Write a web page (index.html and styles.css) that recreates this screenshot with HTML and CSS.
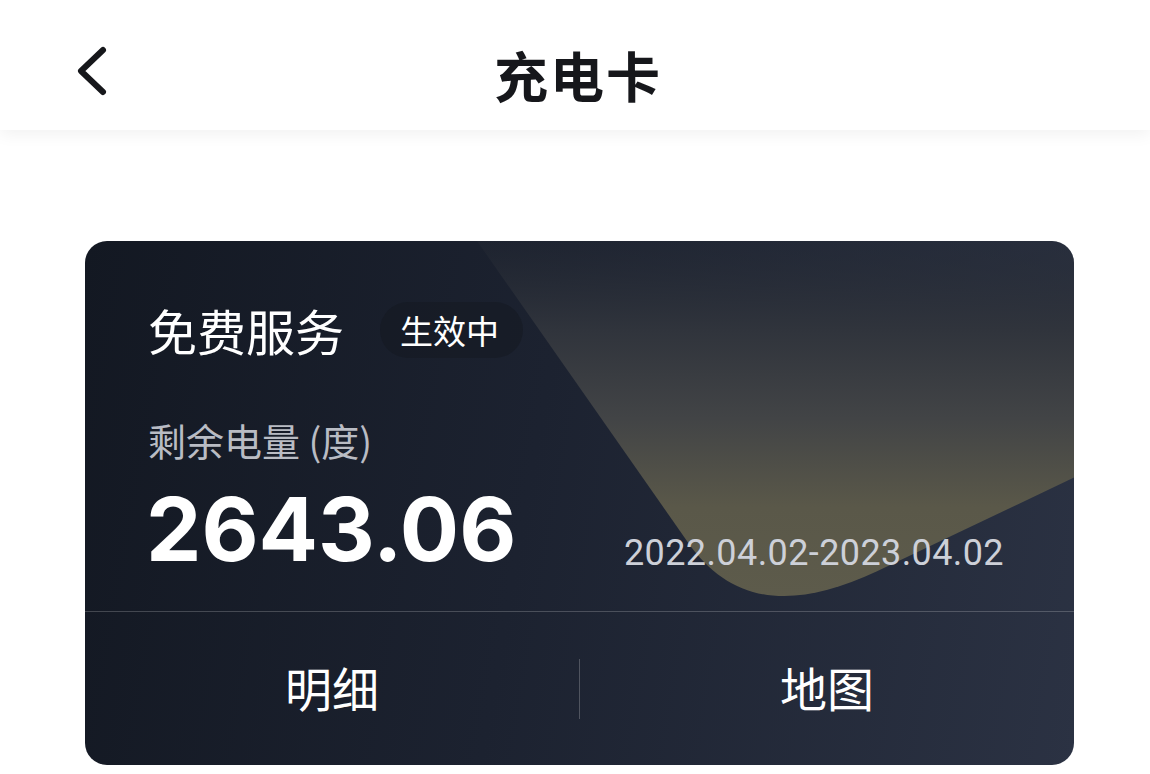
FILE: index.html
```html
<!DOCTYPE html>
<html>
<head>
    <title>充电卡</title>
    <link rel="stylesheet" href="styles.css">
</head>
<body>
    <div class="header">
        <div class="backBtn">
            <svg width="40" height="52" viewBox="0 0 40 52">
                <path d="M31 5 L9 26 L31 47" fill="none" stroke="#16171b" stroke-width="6" stroke-linecap="round" stroke-linejoin="round"/>
            </svg>
        </div>
        <div class="title">充电卡</div>
        <div></div>
    </div>

    <div class="card">
        <svg class="cardShape" viewBox="0 0 989 525" preserveAspectRatio="none">
            <defs>
                <linearGradient id="shapeFill" x1="0" y1="0" x2="0" y2="1">
                    <stop offset="0" stop-color="#262b35" stop-opacity="0.3"/>
                    <stop offset="0.25" stop-color="#30343c"/>
                    <stop offset="0.5" stop-color="#424446"/>
                    <stop offset="0.75" stop-color="#5a5849"/>
                    <stop offset="1" stop-color="#5d5b4b"/>
                </linearGradient>
            </defs>
            <path d="M392 0 L603 302 C645 362 705 372 792 331 L989 237 L989 0 Z" fill="url(#shapeFill)"/>
        </svg>

        <div class="cardTop">
            <div class="cardHead">
                <span class="cardName">免费服务</span>
                <span class="badge">生效中</span>
            </div>
            <div class="label">剩余电量 (度)</div>
            <div class="amountRow">
                <span class="amount">2643.06</span>
                <span class="period">2022.04.02-2023.04.02</span>
            </div>
        </div>

        <div class="cardBottom">
            <div class="action">明细</div>
            <div class="split"></div>
            <div class="action">地图</div>
        </div>
    </div>
</body>
</html>
```

FILE: styles.css
```css
body {
    margin: 0;
    background-color: #ffffff;
    font-family: "Noto Sans CJK SC", "Noto Sans", sans-serif;
}

.header {
    height: 130px;
    box-sizing: border-box;
    padding-top: 20px;
    display: grid;
    grid-template-columns: 1fr auto 1fr;
    align-items: center;
    background-color: #ffffff;
    box-shadow: 0 4px 16px rgba(0, 0, 0, 0.06);
    position: relative;
}

.backBtn {
    padding-left: 72px;
    padding-bottom: 8px;
    display: flex;
}

.title {
    font-size: 54px;
    font-weight: bold;
    color: #16171b;
    letter-spacing: 2px;
    padding-left: 6px;
    padding-bottom: 2px;
}

.card {
    position: relative;
    width: 989px;
    margin: 111px 0 0 85px;
    border-radius: 22px;
    overflow: hidden;
    background: linear-gradient(100deg, #131822 0%, #1c2230 45%, #2b3243 100%);
    color: #ffffff;
}

.cardShape {
    position: absolute;
    top: 0;
    left: 0;
    width: 100%;
    height: 100%;
}

.cardTop {
    position: relative;
    height: 371px;
    box-sizing: border-box;
    padding: 61px 70px 0 63px;
    border-bottom: 1px solid rgba(255, 255, 255, 0.2);
}

.cardHead {
    display: flex;
    align-items: center;
    height: 56px;
}

.cardName {
    font-size: 49px;
    line-height: 56px;
}

.badge {
    margin-left: 36px;
    height: 56px;
    line-height: 56px;
    padding: 0 24px 0 20px;
    border-radius: 28px;
    background-color: rgba(20, 24, 32, 0.5);
    font-size: 33px;
}

.label {
    margin-top: 59px;
    font-size: 38px;
    line-height: 46px;
    color: #b9bcc4;
}

.amountRow {
    margin-top: 22px;
    display: flex;
    justify-content: space-between;
    align-items: flex-end;
}

.amount {
    font-family: Inter, "Liberation Sans", sans-serif;
    font-weight: bold;
    font-size: 88px;
    line-height: 88px;
    margin-left: -2px;
}

.period {
    font-family: Roboto, "Liberation Sans", sans-serif;
    font-size: 36px;
    line-height: 36px;
    color: #cdd0d8;
    padding-bottom: 2px;
    letter-spacing: 0.4px;
}

.cardBottom {
    position: relative;
    height: 153px;
    display: flex;
    align-items: center;
}

.action {
    flex: 1;
    text-align: center;
    font-size: 47px;
    padding-bottom: 4px;
}

.split {
    width: 1px;
    height: 60px;
    background-color: rgba(255, 255, 255, 0.22);
}
```
